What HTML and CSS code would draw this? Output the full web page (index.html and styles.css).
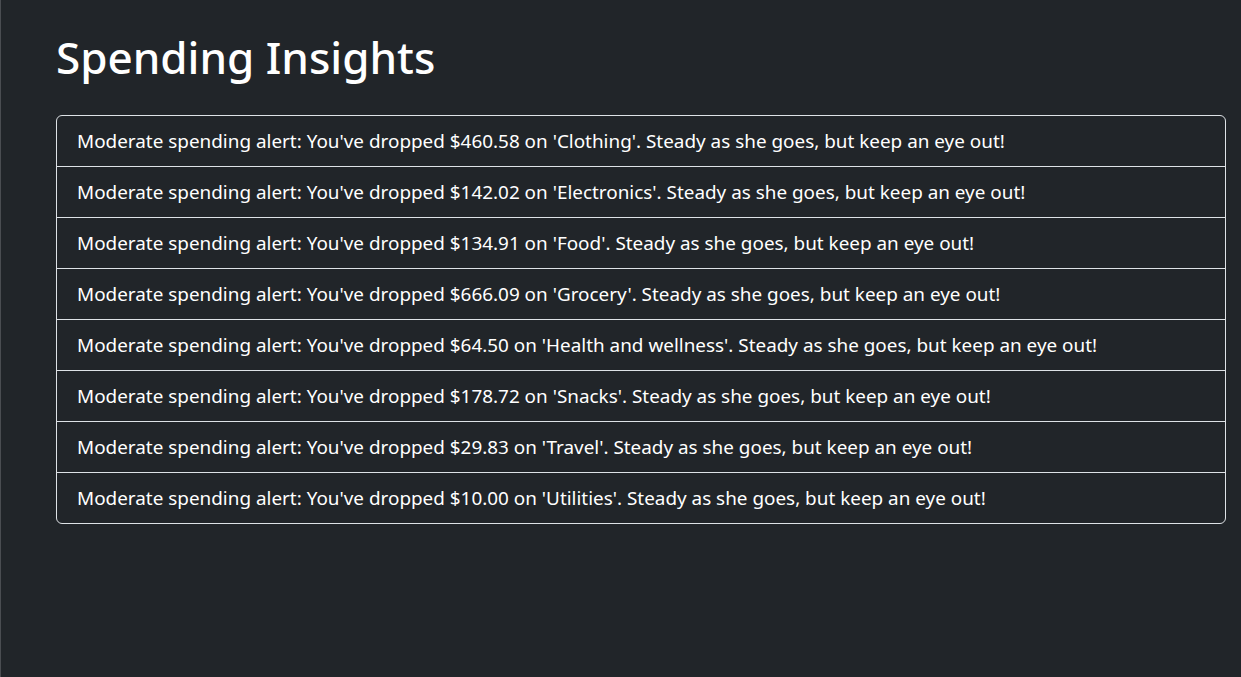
FILE: index.html
```html
<!DOCTYPE html>
<html lang="en">
<head>
<meta charset="utf-8">
<title>Spending Insights</title>
<link rel="stylesheet" href="styles.css">
</head>
<body>
<div class="page">
  <h1 class="title">Spending Insights</h1>
  <ul class="insights">
    <li class="insight">Moderate spending alert: You've dropped $460.58 on 'Clothing'. Steady as she goes, but keep an eye out!</li>
    <li class="insight">Moderate spending alert: You've dropped $142.02 on 'Electronics'. Steady as she goes, but keep an eye out!</li>
    <li class="insight">Moderate spending alert: You've dropped $134.91 on 'Food'. Steady as she goes, but keep an eye out!</li>
    <li class="insight">Moderate spending alert: You've dropped $666.09 on 'Grocery'. Steady as she goes, but keep an eye out!</li>
    <li class="insight">Moderate spending alert: You've dropped $64.50 on 'Health and wellness'. Steady as she goes, but keep an eye out!</li>
    <li class="insight">Moderate spending alert: You've dropped $178.72 on 'Snacks'. Steady as she goes, but keep an eye out!</li>
    <li class="insight">Moderate spending alert: You've dropped $29.83 on 'Travel'. Steady as she goes, but keep an eye out!</li>
    <li class="insight">Moderate spending alert: You've dropped $10.00 on 'Utilities'. Steady as she goes, but keep an eye out!</li>
  </ul>
</div>
</body>
</html>
```

FILE: styles.css
```css
html, body {
  margin: 0;
  padding: 0;
  height: 100%;
}
body {
  background: #212529;
  color: #ffffff;
  font-family: "Noto Sans", "Open Sans", sans-serif;
  border-left: 1px solid #4a4d51;
  box-sizing: border-box;
}
.page {
  padding: 30px 15px 0 55px;
}
.title {
  margin: 0 0 30px 0;
  font-size: 44px;
  font-weight: 500;
  line-height: 55px;
}
.insights {
  list-style: none;
  margin: 0;
  padding: 0;
  border: 1px solid #dee2e6;
  border-radius: 6px;
}
.insight {
  padding: 10px 20px;
  font-size: 18.9px;
  line-height: 30px;
  border-top: 1px solid #dee2e6;
}
.insight:first-child {
  border-top: none;
}
```
